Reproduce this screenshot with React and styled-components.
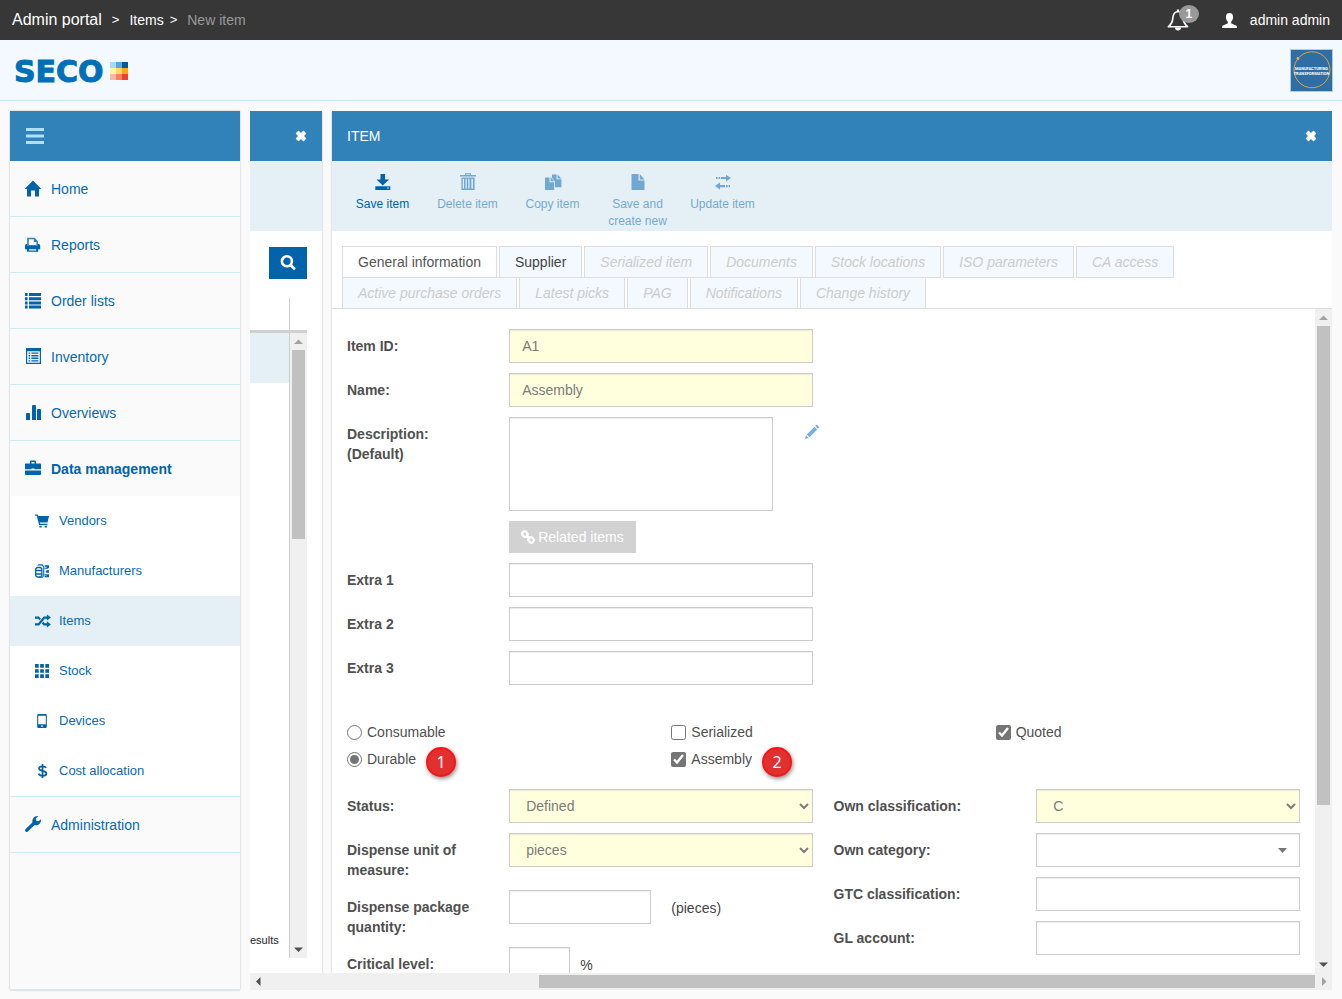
import React from 'react';
import styled, { createGlobalStyle, css } from 'styled-components';

const c = {
  dark: '#373737',
  header: '#3182b9',
  brand: '#0063ab',
  link: '#0a69ae',
  pale: '#e4f0f6',
  ice: '#f3f9fe',
  line: '#cdeaf6',
  grey: '#cccccc',
  text: '#505050',
};

const Global = createGlobalStyle`
  *, *::before, *::after { box-sizing: border-box; }
  body {
    margin: 0;
    background: #fafafa;
    color: ${c.text};
    font: 14px/20px "Liberation Sans", Arial, sans-serif;
  }
  button, input, select, textarea { font: inherit; color: inherit; margin: 0; border-radius: 0; }
  button { padding: 0; border: 0; background: none; cursor: pointer; }
  a { color: inherit; text-decoration: none; }
  ul { margin: 0; padding: 0; list-style: none; }
  svg { display: block; flex: none; overflow: visible; }
`;

/* ---------- icons ---------- */

const shapes = {
  home: <path d="M8-.5 16.400 7.900H14V15.500H10V9.500H6v6H2V7.900H-.4z" />,
  print: (
    <>
      <path fillRule="evenodd" d="M2.200.8h7.300l3.500 3.500V9H2.200zM3.800 2.200V8h7.600V5H8.800V2.200z" opacity=".8" />
      <path d="M0 8.500A1.500 1.500 0 0 1 1.500 7h.7v2h10.800V7h.7a1.500 1.500 0 0 1 1.500 1.500v3.700H0z" />
      <path fillRule="evenodd" d="M2 11h11.200v3.800H2zM4 12v1.400h7.200V12z" />
    </>
  ),
  list: (
    <path d="M0 0h2.6v3H0zM0 4.2h2.6v3H0zM0 8.4h2.6v3H0zM0 12.6h2.6v3H0zM4 0h12v3H4zM4 4.2h12v3H4zM4 8.4h12v3H4zM4 12.6h12v3H4z" />
  ),
  inventory: (
    <path
      fillRule="evenodd"
      d="M1-1h15v16H1zM2.200 2.200v11.600h12.600V2.200zM3.600 3.400h1.600v1.400H3.600zM6.400 3.400h7v1.400h-7zM3.600 6h1.600v1.400H3.600zM6.400 6h7v1.400h-7zM3.600 8.600h1.600V10H3.600zM6.400 8.600h7V10h-7zM3.600 11.200h1.600v1.300H3.600zM6.400 11.200h7v1.300h-7z"
    />
  ),
  bars: (
    <path d="M1 9a1 1 0 0 1 1-1h2a1 1 0 0 1 1 1v6H1zM7 1a1 1 0 0 1 1-1h2a1 1 0 0 1 1 1v14H7zM12 5a1 1 0 0 1 1-1h2a1 1 0 0 1 1 1v10h-4z" />
  ),
  briefcase: (
    <path
      fillRule="evenodd"
      d="M5 2.500V.7C5 0 5.500-.5 6.200-.5h3.600c.7 0 1.200.5 1.200 1.200V2.500h4c.6 0 1 .4 1 1v4.700H9.500V7.500h-3v.7H0V3.500c0-.6.400-1 1-1zM6.500.9v1.600h3V.9zM0 9.500h16V13c0 .6-.4 1-1 1H1c-.6 0-1-.4-1-1z"
    />
  ),
  cart: (
    <path d="M0 .5h3l.7 1.800H16l-1.700 7.400H5.400l.5 1.500h8.300v1.400H4.700L2 1.900H0zM5 13.500h2.600v1.800H5zM11 13.500h2.600v1.800H11z" />
  ),
  manufacturers: (
    <>
      <path
        d="M.8 5.400 2.400 4h3.800l1.600 1.400v8L6.200 14.800H2.400L.8 13.400zM.8 7.400h7M.8 11.400h7"
        fill="none"
        stroke="currentColor"
        strokeWidth="1.500"
      />
      <path d="M2.500 1.600 4 .4h4.500L10.600 3v10.400L8.400 16H3v-1h4.800l1.600-2V3.400L8 1.600zM11 1.400h5v3L14.400 5.500H11V4.200h2.200V3.200H11zM12 8.400 13.600 7H16v3h-3zM11 11.800h5V15h-5v-1.200h2.200V13H11z" />
    </>
  ),
  shuffle: (
    <path d="M0 2.800h4.500L6.800 5.400 5.200 7.200 3.600 5.400H0zM0 10.600h3.600l6.400-7.800h3.600V.6l4.600 3.500-4.600 3.400V5.400h-2.400l-6.500 7.800H0zM9.400 8.800l1.800 1.800h2.400V8.400l4.600 3.500-4.600 3.500v-2.200h-3.600L7.800 10.800z" />
  ),
  grid: (
    <path d="M0 0h4.200v4.200H0zM5.900 0h4.200v4.200H5.900zM11.800 0H16v4.200h-4.200zM0 5.900h4.200v4.200H0zM5.900 5.900h4.200v4.200H5.900zM11.800 5.900H16v4.200h-4.200zM0 11.800h4.200V16H0zM5.900 11.800h4.200V16H5.900zM11.800 11.800H16V16h-4.200z" />
  ),
  phone: (
    <path fillRule="evenodd" d="M4 0h8a1.500 1.500 0 0 1 1.500 1.500v13A1.500 1.500 0 0 1 12 16H4a1.500 1.500 0 0 1-1.500-1.500v-13A1.500 1.500 0 0 1 4 0zM3.700 2v9.600h8.600V2zM7 13v1.700h2V13z" />
  ),
  dollar: (
    <path
      d="M12.600 4.600C12 3.200 10.600 2.600 8.600 2.600 6.200 2.600 4.600 3.600 4.600 5.200 4.600 9 13 6.600 13 10.800c0 1.700-1.600 2.700-4.300 2.700-2.300 0-4-.8-4.500-2.600M8.600 0v16"
      fill="none"
      stroke="currentColor"
      strokeWidth="2"
    />
  ),
  wrench: (
    <path d="M.6 12 7.400 5.600C6.800 3.400 8 .6 10.200-.5c1-.5 2.200-.7 3.200-.5L10.800 1.600l.5 2.200 2.200.5L16 2.200c.3 2-.6 4.200-2.400 5.300-1.300.8-2.700.9-4 .5L2.800 14.400a1.500 1.500 0 0 1-2.200 0 1.700 1.700 0 0 1 0-2.400z" />
  ),
  save: (
    <path fillRule="evenodd" d="M5.500 0h4.600v5.600h4L7.800 11.600 1.500 5.600h4zM.3 12.200h15V16H.3zM12.100 13.400v1.200h1.800v-1.200z" />
  ),
  trash: (
    <path
      fillRule="evenodd"
      d="M5 1V-.8h6V1h5v1.600H0V1zM6.300.2V1h3.400V.2zM1.400 3.600h13.200V16H1.400zM2.800 4.800v9.800H4V4.800zM5.500 4.800v9.800h1.200V4.800zM8.300 4.800v9.800h1.200V4.800zM11.400 4.800v9.800h1.500V4.800z"
    />
  ),
  copy: (
    <path d="M0 3.600h4.600v4.600h4.600V16H0zM5.600 3l3.600 4.200H5.600zM7 .6h4.600v4.600h4.800v8H10V7.400L7 3.700zM12.600.6l3.800 3.800h-3.800z" />
  ),
  file: <path d="M1.500 0h7v6.600h6V16h-13zM9.700 0 14.500 5.400H9.700z" />,
  exchange: (
    <path d="M1 3h1.600v2H1zM3.600 3h1.600v2H3.600zM6 3h5V.8L16 4l-5 3.400V5H6zM5 8.600v2.400h5v2.200H5v2.200L0 12zM11 11h1.600v2.200H11zM13.600 11H15v2.200h-1.400z" />
  ),
  remove: (
    <path d="M1.400 4 4 1.400a1 1 0 0 1 1.400 0L8 4l2.600-2.600a1 1 0 0 1 1.400 0L14.600 4a1 1 0 0 1 0 1.400L12 8l2.600 2.600a1 1 0 0 1 0 1.400L12 14.600a1 1 0 0 1-1.400 0L8 12l-2.600 2.600a1 1 0 0 1-1.400 0L1.400 12a1 1 0 0 1 0-1.400L4 8 1.400 5.400a1 1 0 0 1 0-1.400z" />
  ),
  search: (
    <path
      d="M11.900 6.300a5 5 0 1 1-10 0 5 5 0 0 1 10 0zM10.300 9.800l4.600 4.400"
      fill="none"
      stroke="currentColor"
      strokeWidth="2.600"
    />
  ),
  pencil: (
    <path d="M0 16l1.200-4.400 3.200 3.200zM2 10.800 10.800 2l3.200 3.200-8.800 8.800zM11.600 1.200 12.800 0h1l2.200 2.200v1L14.800 4.400z" />
  ),
  link: (
    <g fill="none" stroke="currentColor" strokeWidth="2.500">
      <rect x="1.200" y="2" width="6.400" height="5.400" rx="2.600" transform="rotate(45 4.400 4.700)" />
      <rect x="8.200" y="8.600" width="6.400" height="5.400" rx="2.600" transform="rotate(45 11.400 11.300)" />
      <path d="M5.800 6.200l4.400 4" />
    </g>
  ),
  user: (
    <path d="M8 0c2.500 0 3.800 1.700 3.800 4.200 0 2-.8 4-2 5v1.200c0 .6.300.9.900 1.100l3.700 1.500c1 .4 1.600 1 1.600 3H0c0-2 .6-2.600 1.600-3l3.700-1.500c.6-.2.900-.5.900-1.100V9.200c-1.200-1-2-3-2-5C4.200 1.700 5.500 0 8 0z" />
  ),
  bell: (
    <>
      <path
        d="M8 1.800c-2.700.4-3.700 2.400-3.800 5C4.100 9.600 3.300 11 1 12.900h14c-2.300-1.900-3.100-3.300-3.200-6.100-.1-2.600-1.100-4.600-3.800-5z"
        fill="none"
        stroke="currentColor"
        strokeWidth="1.200"
        strokeLinejoin="round"
      />
      <path d="M5.800 13.400h4.400a2.200 2.200 0 0 1-4.400 0zM7.200.4h1.600v1.800H7.200z" />
    </>
  ),
  menu: <path d="M0 .9h16v2.700H0zM0 6.600h16v2.700H0zM0 12.400h16v2.700H0z" />,
};

const Icon = ({ name, size = 16 }) => (
  <svg width={size} height={size} viewBox="0 0 16 16" fill="currentColor" aria-hidden="true">
    {shapes[name]}
  </svg>
);

/* ---------- page frame ---------- */

const Page = styled.div`
  height: 100vh;
  display: flex;
  flex-direction: column;
`;

const TopBar = styled.header`
  flex: none;
  height: 40px;
  padding: 0 12px;
  display: flex;
  align-items: center;
  justify-content: space-between;
  background: ${c.dark};
  color: #fff;
`;

const Breadcrumbs = styled.nav`
  display: flex;
  align-items: center;
  gap: 10px;
`;

const PortalLink = styled.a`
  font-size: 16px;
`;

const Crumb = styled.span`
  display: flex;
  gap: 6px;
`;

const Separator = styled.span`
  font-size: 13px;
`;

const CurrentCrumb = styled.span`
  color: #999;
`;

const Account = styled.div`
  display: flex;
  align-items: center;
`;

const BellButton = styled.button`
  position: relative;
  margin-right: 33px;
  color: #fff;
`;

const BellCount = styled.span`
  position: absolute;
  top: -4px;
  left: 12px;
  width: 20px;
  height: 18px;
  border-radius: 50%;
  background: #999;
  font-size: 12px;
  font-weight: bold;
  line-height: 18px;
`;

const UserLink = styled.a`
  display: flex;
  align-items: center;
  gap: 13px;
`;

const BrandBar = styled.div`
  flex: none;
  height: 61px;
  padding: 0 9px 0 14px;
  display: flex;
  align-items: center;
  justify-content: space-between;
  background: ${c.ice};
  border-bottom: 1px solid ${c.line};
`;

const Workspace = styled.div`
  flex: 1;
  min-height: 0;
  display: flex;
  gap: 10px;
  padding: 10px 10px 9px;
`;

/* ---------- sidebar ---------- */

const Sidebar = styled.nav`
  flex: 0 0 230px;
  display: flex;
  flex-direction: column;
  background: #fafafa;
  border-bottom: 1px solid #d5e8f2;
  box-shadow: 0 0 2px rgba(0, 0, 0, 0.25);
`;

const MenuToggle = styled.button`
  flex: none;
  height: 50px;
  padding-left: 16px;
  background: ${c.header};
  color: #aee0fb;
`;

const NavLink = styled.a`
  display: flex;
  align-items: center;
  gap: 10px;
  height: ${(p) => (p.$open ? 55 : 56)}px;
  padding-left: 15px;
  color: ${(p) => (p.$open ? c.brand : c.link)};
  font-weight: ${(p) => (p.$open ? 'bold' : 'normal')};
  border-bottom: ${(p) => (p.$open ? 0 : 1)}px solid ${c.line};
  svg { color: ${c.brand}; }
`;

const SubNav = styled.ul`
  background: #fff;
  border-bottom: 1px solid ${c.line};
`;

const SubLink = styled.a`
  display: flex;
  align-items: center;
  gap: 10px;
  height: 50px;
  padding-left: 25px;
  font-size: 13px;
  color: ${c.link};
  background: ${(p) => (p.$active ? c.pale : 'transparent')};
  svg { color: ${c.brand}; }
`;

/* ---------- scroll bars ---------- */

const Track = styled.div`
  flex: none;
  display: flex;
  align-items: center;
  background: #f0f0f0;
  ${(p) =>
    p.$horizontal
      ? css`height: 17px;`
      : css`
          width: 17px;
          flex-direction: column;
        `}
`;

const TrackBody = styled.div`
  flex: 1;
  display: flex;
  flex-direction: ${(p) => (p.$horizontal ? 'row' : 'column')};
  justify-content: ${(p) => (p.$horizontal ? 'flex-end' : 'flex-start')};
`;

const Thumb = styled.div`
  flex: 0 0 ${(p) => p.$size}%;
  background: #c1c1c1;
  ${(p) => (p.$horizontal ? css`height: 13px;` : css`width: 13px;`)}
`;

const ArrowBox = styled.span`
  flex: none;
  width: 17px;
  height: 17px;
  display: grid;
  place-items: center;
  color: ${(p) => (p.$off ? '#a3a3a3' : '#505050')};
`;

const arrows = {
  up: 'M4 11 8.500 6.500l4.500 4.500z',
  down: 'M4 6.500h9L8.500 11z',
  left: 'M10.500 4v9L6 8.500z',
  right: 'M7 4v9l4.500-4.500z',
};

const Arrow = ({ dir, off }) => (
  <ArrowBox $off={off}>
    <svg width="17" height="17" viewBox="0 0 17 17" fill="currentColor" aria-hidden="true">
      <path d={arrows[dir]} />
    </svg>
  </ArrowBox>
);

const ScrollBar = ({ horizontal, size }) => (
  <Track $horizontal={horizontal} aria-hidden="true">
    <Arrow dir={horizontal ? 'left' : 'up'} off={!horizontal} />
    <TrackBody $horizontal={horizontal}>
      <Thumb $horizontal={horizontal} $size={size} />
    </TrackBody>
    <Arrow dir={horizontal ? 'right' : 'down'} off={horizontal} />
  </Track>
);

/* ---------- panels ---------- */

const Content = styled.main`
  flex: 1;
  min-width: 0;
  display: flex;
  flex-direction: column;
`;

const Panels = styled.div`
  flex: 1;
  min-height: 0;
  display: flex;
  gap: 10px;
  overflow: hidden;
`;

const Panel = styled.section`
  min-width: 0;
  flex: ${(p) => (p.$narrow ? '0 0 72px' : '1')};
  display: flex;
  flex-direction: column;
  background: #fff;
  box-shadow: 0 0 2px rgba(0, 0, 0, 0.25);
`;

const PanelHeader = styled.div`
  flex: none;
  height: 50px;
  padding: 0 15px;
  display: flex;
  align-items: center;
  justify-content: space-between;
  background: ${c.header};
  color: #fff;
`;

const PanelTitle = styled.h1`
  margin: 0;
  font-size: 14px;
  font-weight: normal;
`;

const CloseButton = styled.button`
  margin-left: auto;
  color: #fff;
`;

const Toolbar = styled.div`
  flex: none;
  height: 70px;
  padding: 0 8px;
  display: flex;
  background: ${c.pale};
`;

const ToolButton = styled.button`
  width: 85px;
  padding: 13px 5px 0;
  display: flex;
  flex-direction: column;
  align-items: center;
  gap: 6px;
  font-size: 12px;
  line-height: 17px;
  color: ${c.brand};
  &:disabled { opacity: 0.5; }
`;

const ResultsPane = styled.div`
  flex: 1;
  min-height: 0;
  padding: 16px 15px 15px 0;
  display: flex;
  flex-direction: column;
`;

const SearchButton = styled.button`
  width: 38px;
  height: 32px;
  margin-left: auto;
  display: grid;
  place-items: center;
  background: ${c.brand};
  color: #fff;
`;

const ColumnHead = styled.div`
  width: 40px;
  height: 32px;
  margin-top: 19px;
  border-right: 1px solid ${c.grey};
`;

const HeadRule = styled.div`
  height: 3px;
  background: #d0d0d0;
`;

const ResultsBody = styled.div`
  flex: 1;
  min-height: 0;
  display: flex;
`;

const ResultsColumn = styled.div`
  flex: 1;
  display: flex;
  flex-direction: column;
  justify-content: space-between;
  border-right: 1px solid ${c.grey};
  padding-bottom: 8px;
  overflow: hidden;
  color: #222;
  font-size: 11px;
`;

const SelectedRow = styled.div`
  height: 50px;
  background: ${c.pale};
`;

/* ---------- tabs ---------- */

const Tabs = styled.div`
  flex: none;
  display: flex;
  flex-wrap: wrap;
  column-gap: 2px;
  padding: 15px 10px 0;
  border-bottom: 1px solid #ddd;
`;

const Tab = styled.button`
  height: 32px;
  margin-bottom: -1px;
  padding: 0 15px;
  border: 1px solid #ddd;
  background: ${(p) => (p.$active ? '#fff' : c.ice)};
  color: ${(p) => (p.$active ? '#555' : '#444')};
  &:disabled {
    color: #ccc;
    font-style: italic;
  }
`;

/* ---------- form ---------- */

const FormArea = styled.div`
  flex: 1;
  min-height: 0;
  display: flex;
`;

const Form = styled.form`
  flex: 1;
  min-width: 0;
  padding: 20px 5px 0;
  overflow: hidden;
`;

const Columns = styled.div`
  display: flex;
  align-items: flex-start;
`;

const Half = styled.div`
  flex: 0 0 50%;
`;

const Row = styled.div`
  display: flex;
  align-items: flex-start;
  margin-bottom: 10px;
`;

const Cell = styled.div`
  flex: 0 0 calc(100% * ${(p) => p.$span} / 12);
  padding: 0 10px;
`;

const Label = styled.label`
  flex: 0 0 calc(100% * ${(p) => p.$span} / 12);
  padding: 7px 10px 0;
  font-weight: bold;
`;

const field = css`
  display: block;
  width: 100%;
  height: 34px;
  border: 1px solid ${c.grey};
  background: ${(p) => (p.$required ? '#ffffde' : '#fff')};
  color: #7b7b7b;
  box-shadow: inset 0 1px 1px rgba(0, 0, 0, 0.075);
`;

const TextInput = styled.input`
  ${field}
  padding: 6px 12px;
`;

const TextArea = styled.textarea`
  ${field}
  height: 94px;
  padding: 6px 12px;
  resize: none;
`;

const Select = styled.select`
  ${field}
  padding: 6px 0 6px 12px;
`;

const Combo = styled.div`
  position: relative;
`;

const ComboSelect = styled.select`
  ${field}
  padding: 6px 30px 6px 12px;
  appearance: none;
`;

const ComboCaret = styled.svg`
  position: absolute;
  top: 15px;
  right: 13px;
  color: #777;
  pointer-events: none;
`;

const EditButton = styled.button`
  margin: 8px 0 0 22px;
  color: #7ab2dc;
`;

const RelatedButton = styled.button`
  height: 32px;
  padding: 0 12px;
  display: flex;
  align-items: center;
  gap: 3px;
  background: #d2d2d2;
  color: #fff;
`;

const Unit = styled.span`
  padding: 8px 0 0 ${(p) => (p.$tight ? 0 : 10)}px;
  color: #444;
`;

const Options = styled.div`
  display: flex;
  align-items: flex-start;
  padding: 27px 0 20px;
`;

const OptionColumn = styled.div`
  flex: 0 0 calc(100% / 3);
  padding: 0 10px;
  display: flex;
  flex-direction: column;
  align-items: flex-start;
  gap: 7px;
`;

const Option = styled.label`
  position: relative;
  display: flex;
  align-items: center;
  gap: 5px;
  height: 20px;
  input {
    width: 15px;
    height: 15px;
    accent-color: #757575;
  }
`;

const Callout = styled.span`
  position: absolute;
  top: -2px;
  left: calc(100% + 10px);
  width: 30px;
  height: 30px;
  border: 2px solid #fb1414;
  border-radius: 50%;
  background: #e03030;
  box-shadow: 1px 2px 4px rgba(0, 0, 0, 0.45);
  color: #fff;
  font: 16px/26px "Noto Sans", sans-serif;
  text-align: center;
`;

/* ---------- logos ---------- */

const swatches = ['#a3dcf8', '#56a5dc', '#005b98', '#fdf4a4', '#fedb60', '#faa61a', '#f9b8a0', '#f58358', '#ee3e2c'];

const SecoLogo = () => (
  <svg width="114" height="18" viewBox="0 0 114 18" role="img" aria-label="Seco">
    <text
      x="0"
      y="21"
      fontFamily="DejaVu Sans, sans-serif"
      fontWeight="bold"
      fontSize="30"
      fill="#006fba"
      stroke="#006fba"
      strokeWidth="1"
    >
      SECO
    </text>
    {swatches.map((fill, i) => (
      <rect key={fill} x={96 + (i % 3) * 6} y={Math.floor(i / 3) * 6 + 1} width="6" height="6" fill={fill} />
    ))}
  </svg>
);

const TransformationLogo = () => (
  <svg width="43" height="43" viewBox="0 0 43 43" role="img" aria-label="Manufacturing Transformation">
    <rect x=".5" y=".5" width="42" height="42" fill="#2f6da6" stroke="#a9cfe6" />
    <path d="M9.300 8A18 18 0 1 1 7.200 10.500" fill="none" stroke="#d9a441" strokeWidth="1" />
    <circle cx="8" cy="9.500" r="1.400" fill="#f2b035" />
    <g fill="#fff" fontFamily="Roboto, sans-serif" fontWeight="bold" fontSize="4" textAnchor="middle">
      <text x="21.500" y="21">MANUFACTURING</text>
      <text x="21.500" y="26">TRANSFORMATION</text>
    </g>
  </svg>
);

/* ---------- data ---------- */

const navTop = [
  ['home', 'Home'],
  ['print', 'Reports'],
  ['list', 'Order lists'],
  ['inventory', 'Inventory'],
  ['bars', 'Overviews'],
];

const navSub = [
  ['cart', 'Vendors'],
  ['manufacturers', 'Manufacturers'],
  ['shuffle', 'Items'],
  ['grid', 'Stock'],
  ['phone', 'Devices'],
  ['dollar', 'Cost allocation'],
];

const tools = [
  ['save', 'Save item'],
  ['trash', 'Delete item'],
  ['copy', 'Copy item'],
  ['file', 'Save and create new'],
  ['exchange', 'Update item'],
];

const tabs = [
  'General information',
  'Supplier',
  'Serialized item',
  'Documents',
  'Stock locations',
  'ISO parameters',
  'CA access',
  'Active purchase orders',
  'Latest picks',
  'PAG',
  'Notifications',
  'Change history',
];

const Field = ({ id, label, labelSpan = 4, span = 8, after, children }) => (
  <Row>
    <Label htmlFor={id} $span={labelSpan}>{label}</Label>
    <Cell $span={span}>{children}</Cell>
    {after}
  </Row>
);

const ItemForm = () => (
  <Form>
    <Columns>
      <Half>
        <Field id="item-id" label="Item ID:">
          <TextInput id="item-id" $required defaultValue="A1" />
        </Field>
        <Field id="name" label="Name:">
          <TextInput id="name" $required defaultValue="Assembly" />
        </Field>
        <Field
          id="description"
          label={<>Description:<br />(Default)</>}
          span={7}
          after={
            <EditButton type="button" aria-label="Edit description">
              <Icon name="pencil" size={14} />
            </EditButton>
          }
        >
          <TextArea id="description" />
        </Field>
        <Row>
          <Cell $span={4} />
          <Cell $span={8}>
            <RelatedButton type="button">
              <Icon name="link" size={14} />
              Related items
            </RelatedButton>
          </Cell>
        </Row>
        {[1, 2, 3].map((n) => (
          <Field key={n} id={`extra-${n}`} label={`Extra ${n}`}>
            <TextInput id={`extra-${n}`} />
          </Field>
        ))}
      </Half>
    </Columns>

    <Options>
      <OptionColumn>
        <Option>
          <input type="radio" name="kind" />
          Consumable
        </Option>
        <Option>
          <input type="radio" name="kind" defaultChecked />
          Durable
          <Callout>1</Callout>
        </Option>
      </OptionColumn>
      <OptionColumn>
        <Option>
          <input type="checkbox" />
          Serialized
        </Option>
        <Option>
          <input type="checkbox" defaultChecked />
          Assembly
          <Callout>2</Callout>
        </Option>
      </OptionColumn>
      <OptionColumn>
        <Option>
          <input type="checkbox" defaultChecked />
          Quoted
        </Option>
      </OptionColumn>
    </Options>

    <Columns>
      <Half>
        <Field id="status" label="Status:">
          <Select id="status" $required>
            <option>Defined</option>
          </Select>
        </Field>
        <Field id="unit" label="Dispense unit of measure:">
          <Select id="unit" $required>
            <option>pieces</option>
          </Select>
        </Field>
        <Field id="package" label="Dispense package quantity:" span={4} after={<Unit>(pieces)</Unit>}>
          <TextInput id="package" />
        </Field>
        <Field id="critical" label="Critical level:" span={2} after={<Unit $tight>%</Unit>}>
          <TextInput id="critical" />
        </Field>
      </Half>
      <Half>
        <Field id="own-class" label="Own classification:" labelSpan={5} span={7}>
          <Select id="own-class" $required>
            <option>C</option>
          </Select>
        </Field>
        <Field id="own-category" label="Own category:" labelSpan={5} span={7}>
          <Combo>
            <ComboSelect id="own-category" />
            <ComboCaret width="9" height="5" viewBox="0 0 9 5" fill="currentColor" aria-hidden="true">
              <path d="M0 0h9L4.500 5z" />
            </ComboCaret>
          </Combo>
        </Field>
        <Field id="gtc" label="GTC classification:" labelSpan={5} span={7}>
          <TextInput id="gtc" />
        </Field>
        <Field id="gl" label="GL account:" labelSpan={5} span={7}>
          <TextInput id="gl" />
        </Field>
      </Half>
    </Columns>
  </Form>
);

const NavItem = ({ icon, children, open }) => (
  <NavLink href="#" $open={open}>
    <Icon name={icon} />
    {children}
  </NavLink>
);

export default function App() {
  return (
    <Page>
      <Global />
      <TopBar>
        <Breadcrumbs aria-label="Breadcrumb">
          <PortalLink href="#">Admin portal</PortalLink>
          <Separator>&gt;</Separator>
          <Crumb>
            <a href="#">Items</a>
            <Separator>&gt;</Separator>
          </Crumb>
          <CurrentCrumb>New item</CurrentCrumb>
        </Breadcrumbs>
        <Account>
          <BellButton aria-label="Notifications">
            <Icon name="bell" size={22} />
            <BellCount>1</BellCount>
          </BellButton>
          <UserLink href="#">
            <Icon name="user" size={15} />
            admin admin
          </UserLink>
        </Account>
      </TopBar>
      <BrandBar>
        <SecoLogo />
        <TransformationLogo />
      </BrandBar>

      <Workspace>
        <Sidebar>
          <MenuToggle aria-label="Toggle menu">
            <Icon name="menu" size={18} />
          </MenuToggle>
          {navTop.map(([icon, label]) => (
            <NavItem key={label} icon={icon}>{label}</NavItem>
          ))}
          <NavItem icon="briefcase" open>Data management</NavItem>
          <SubNav>
            {navSub.map(([icon, label]) => (
              <li key={label}>
                <SubLink href="#" $active={label === 'Items'}>
                  <Icon name={icon} size={14} />
                  {label}
                </SubLink>
              </li>
            ))}
          </SubNav>
          <NavItem icon="wrench">Administration</NavItem>
        </Sidebar>

        <Content>
          <Panels>
            <Panel $narrow>
              <PanelHeader>
                <CloseButton aria-label="Close list">
                  <Icon name="remove" size={12} />
                </CloseButton>
              </PanelHeader>
              <Toolbar />
              <ResultsPane>
                <SearchButton aria-label="Search">
                  <Icon name="search" />
                </SearchButton>
                <ColumnHead />
                <HeadRule />
                <ResultsBody>
                  <ResultsColumn>
                    <SelectedRow />
                    <span>esults</span>
                  </ResultsColumn>
                  <ScrollBar size={32} />
                </ResultsBody>
              </ResultsPane>
            </Panel>

            <Panel>
              <PanelHeader>
                <PanelTitle>ITEM</PanelTitle>
                <CloseButton aria-label="Close item">
                  <Icon name="remove" size={12} />
                </CloseButton>
              </PanelHeader>
              <Toolbar>
                {tools.map(([icon, label], i) => (
                  <ToolButton key={label} disabled={i > 0}>
                    <Icon name={icon} />
                    {label}
                  </ToolButton>
                ))}
              </Toolbar>
              <Tabs role="tablist">
                {tabs.map((label, i) => (
                  <Tab key={label} role="tab" aria-selected={i === 0} $active={i === 0} disabled={i > 1}>
                    {label}
                  </Tab>
                ))}
              </Tabs>
              <FormArea>
                <ItemForm />
                <ScrollBar size={76} />
              </FormArea>
            </Panel>
          </Panels>
          <ScrollBar horizontal size={74} />
        </Content>
      </Workspace>
    </Page>
  );
}
